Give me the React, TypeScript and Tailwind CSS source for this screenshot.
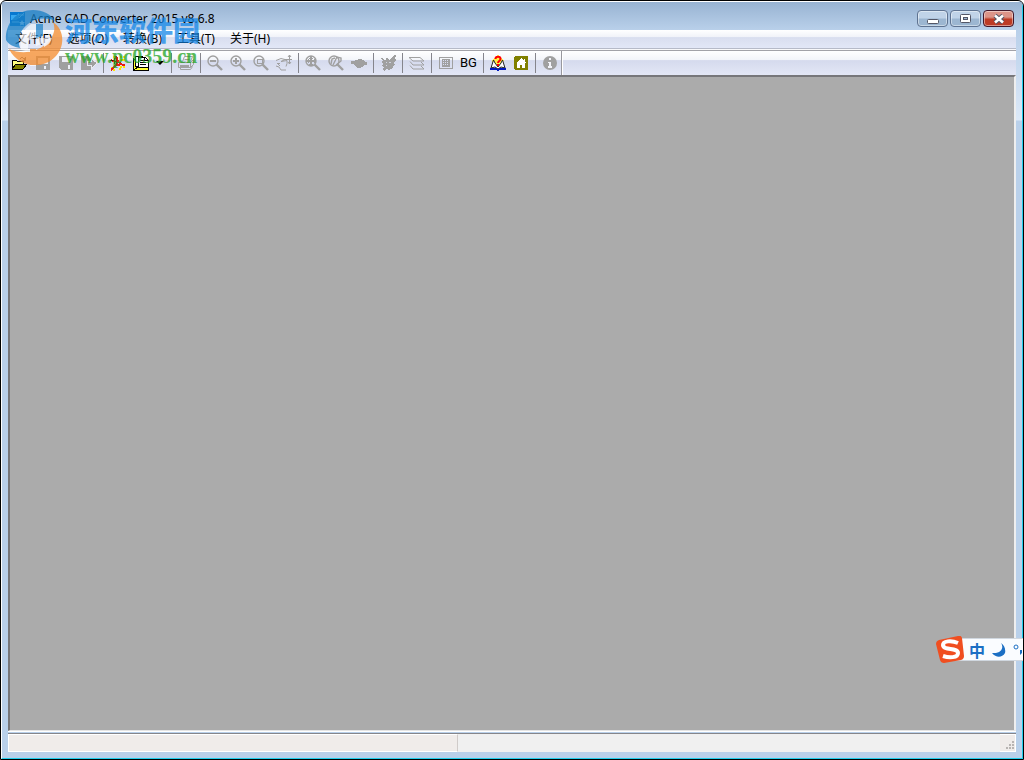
import type { ReactNode } from "react";

const menus = ["文件(F)", "选项(O)", "转换(B)", "工具(T)", "关于(H)"];

function Icon({ children }: { children: ReactNode }) {
  return (
    <svg
      className="h-4 w-4 shrink-0"
      viewBox="0 0 16 16"
      fill="none"
      stroke="#a0a0a0"
      shapeRendering="crispEdges"
      aria-hidden="true"
    >
      {children}
    </svg>
  );
}

function Magnifier({ children }: { children?: ReactNode }) {
  return (
    <Icon>
      <circle cx="6" cy="6" r="5" strokeWidth="1.4" shapeRendering="auto" />
      <path d="M9.5 9.5L15 15" strokeWidth="2.4" shapeRendering="auto" />
      {children}
    </Icon>
  );
}

function Tool({
  label,
  disabled = false,
  children,
}: {
  label: string;
  disabled?: boolean;
  children: ReactNode;
}) {
  return (
    <button
      type="button"
      aria-label={label}
      title={label}
      disabled={disabled}
      className="flex h-5 w-[23px] shrink-0 items-center justify-center"
    >
      {children}
    </button>
  );
}

function Separator() {
  return (
    <span className="flex h-5 w-1.5 shrink-0 justify-center">
      <span className="w-px bg-[#85858c]" />
    </span>
  );
}

function AppIcon() {
  return (
    <svg className="h-4 w-4 shrink-0" viewBox="0 0 16 16" aria-hidden="true">
      <path d="M0 1h15v14H0z" fill="#0878d0" />
      <path d="M1 4h6l2-2v5l-3 2H1z" fill="#38a8f0" />
      <path d="M9 7l5-5M8 4h6M2 11h7" stroke="#8fdcff" fill="none" />
      <path d="M12 9l1 2h2l-1.5 1.5.5 2-2-1-2 1 .5-2L9 11h2z" fill="#d8f2ff" />
    </svg>
  );
}

function TitleBar() {
  const button =
    "flex h-[17px] w-[31px] items-center justify-center rounded-sm border shadow-[inset_0_0_0_1px_rgba(255,255,255,0.45)]";

  return (
    <header className="flex h-7 items-start justify-between bg-linear-to-b from-[#98b3d2] to-[#b9d0ea] px-2">
      <div className="flex items-center gap-1 pt-[7px]">
        <AppIcon />
        <h1 className="whitespace-nowrap text-[12px] leading-5 text-black">
          Acme CAD Converter 2015 v8.6.8
        </h1>
      </div>
      <div className="flex gap-0.5 pt-2">
        <button
          type="button"
          aria-label="最小化"
          className={`${button} border-[#5f7391] bg-linear-to-b from-[#c0d3e8] from-45% to-[#9cb6d1] to-55%`}
        >
          <svg className="h-3 w-3" viewBox="0 0 12 12" aria-hidden="true">
            <rect x="0.5" y="6.5" width="11" height="4" rx="1" fill="#fff" stroke="#535666" />
          </svg>
        </button>
        <button
          type="button"
          aria-label="最大化"
          className={`${button} border-[#5f7391] bg-linear-to-b from-[#c0d3e8] from-45% to-[#9cb6d1] to-55%`}
        >
          <svg className="h-3 w-3" viewBox="0 0 12 12" aria-hidden="true">
            <rect x="0.5" y="1.5" width="10" height="8" rx="1" fill="#fff" stroke="#535666" />
            <rect x="3.5" y="4.5" width="4" height="2" fill="#9cb6d1" stroke="#535666" />
          </svg>
        </button>
        <button
          type="button"
          aria-label="关闭"
          className={`${button} border-[#42182a] bg-linear-to-b from-[#dc9488] from-40% to-[#bd3b25] to-55%`}
        >
          <svg className="h-3 w-3" viewBox="0 0 12 12" aria-hidden="true">
            <path d="M2 2.5l8 7M10 2.5l-8 7" stroke="#535666" strokeWidth="4.5" />
            <path d="M2 2.5l8 7M10 2.5l-8 7" stroke="#fff" strokeWidth="2.6" />
          </svg>
        </button>
      </div>
    </header>
  );
}

function MenuBar() {
  return (
    <nav className="flex h-[19px] items-center gap-px border-b border-[#b6bac8] bg-[linear-gradient(to_bottom,#ffffff,#f1f3f9_38%,#d9deef_42%,#e2e7f7)]">
      {menus.map((menu) => (
        <button
          key={menu}
          type="button"
          className="whitespace-nowrap px-[7px] text-[12px] leading-[18px] text-black"
        >
          {menu}
        </button>
      ))}
    </nav>
  );
}

function ToolBar() {
  return (
    <div
      role="toolbar"
      aria-label="工具栏"
      className="flex h-[25px] items-center border-t border-[#a2a2a8] bg-[linear-gradient(to_bottom,#ffffff,#f3f5fa_36%,#d5daed_40%,#e3e7f6)]"
    >
      <Tool label="打开">
        <Icon>
          <path d="M0 14V5h4l1 1h6v3" fill="#ffff80" stroke="#000" />
          <path d="M0 14l4-5h11l-4 5z" fill="#808000" stroke="#000" />
          <path d="M8 3.5q3-2 5 1M13.5 2v3H10" stroke="#777" />
        </Icon>
      </Tool>
      <Tool label="保存" disabled>
        <Icon>
          <path d="M1 1h14v14H1z" fill="#a0a0a0" stroke="none" />
          <path d="M3 3h10v6H3zM9 11h2v3H9z" fill="#edeff7" stroke="none" />
        </Icon>
      </Tool>
      <Tool label="另存为" disabled>
        <Icon>
          <path d="M1 1h14v14H3l-2-2z" fill="#a0a0a0" stroke="none" />
          <path d="M4 2h8v5H4zM10 10h2v4h-2z" fill="#edeff7" stroke="none" />
        </Icon>
      </Tool>
      <Tool label="导出" disabled>
        <Icon>
          <path d="M0 1h8l2 3v11H0z" fill="#a0a0a0" stroke="none" />
          <path d="M6 6h4V3l6 5-6 6v-4H6z" fill="#a0a0a0" stroke="#e8eaf2" />
        </Icon>
      </Tool>
      <Separator />
      <Tool label="导出 PDF">
        <Icon>
          <path
            d="M3 2h2M10 2h2M13 2h2M11 5h4M10 12h2M13 12h2M1 13h2M3 15h2M9 14h2"
            stroke="#ffe500"
            strokeWidth="2"
          />
          <path
            d="M6 1c0 5 4 9 9 9M6 1c3 4 2 9-5 14M4 11c4-2 7-2 11-1M1 5l4 2"
            stroke="#ec1b12"
            strokeWidth="2"
          />
          <path d="M0 5h4l3 3M4 3l1 6" stroke="#600000" />
        </Icon>
      </Tool>
      <Tool label="批量转换">
        <Icon>
          <path d="M0 3v12h15v-4l-4 1H7L4 7z" fill="#ffff30" stroke="#000" />
          <path d="M2 1h7v10H2z" fill="#fff" stroke="#000" />
          <path d="M5 2h7l3 3v7H5z" fill="#fff" stroke="#000" />
          <path d="M7 5h4M7 7h6M7 9h6M11 2v3h4" stroke="#000" />
          <path d="M1 15l4-3h10" stroke="#000" />
        </Icon>
      </Tool>
      <button
        type="button"
        aria-label="转换选项"
        className="flex h-5 w-4 shrink-0 items-center justify-center"
      >
        <svg className="h-1 w-2" viewBox="0 0 8 4" aria-hidden="true">
          <path d="M0 0h8L4 4z" />
        </svg>
      </button>
      <Separator />
      <Tool label="打印" disabled>
        <Icon>
          <path
            d="M4.5 6.5l2-5h8l-2 5M.5 7.5h12v5H.5zM12.5 7.5l3-3v5l-3 3M2.5 12.5v2h10l2-3M6.5 4.5h5"
            shapeRendering="auto"
          />
          <path d="M2 10h9v2H2z" fill="#a0a0a0" stroke="none" />
        </Icon>
      </Tool>
      <Separator />
      <Tool label="缩小" disabled>
        <Magnifier>
          <path d="M3 6h6" strokeWidth="2" />
        </Magnifier>
      </Tool>
      <Tool label="放大" disabled>
        <Magnifier>
          <path d="M3 6h6M6 3v6" strokeWidth="2" />
        </Magnifier>
      </Tool>
      <Tool label="窗口缩放" disabled>
        <Magnifier>
          <path d="M4 4h5v4H4z" />
        </Magnifier>
      </Tool>
      <Tool label="平移" disabled>
        <Icon>
          <path
            d="M0 5.5l5-2 4 1-4 2 6-1v3l-1 3M1 8.5h3M0 11l3 1 2 3h5M2 9l2 2M13.5 0v9M9 4.5h7M12 2l1.5-2L15 2M12 7l1.5 2L15 7"
            shapeRendering="auto"
          />
        </Icon>
      </Tool>
      <Separator />
      <Tool label="全部显示" disabled>
        <Magnifier>
          <path d="M1 6h10M6 1v10" strokeWidth="2" />
          <path d="M4 3h4M4 9h4M3 4v4M9 4v4" />
        </Magnifier>
      </Tool>
      <Tool label="上一视图" disabled>
        <Magnifier>
          <path d="M3 9l1-5 3-1M5 10l4-8 4 1v3l-5 4" strokeWidth="1.4" shapeRendering="auto" />
        </Magnifier>
      </Tool>
      <Tool label="三维视图" disabled>
        <Icon>
          <path
            d="M0 6l3 1 2-2h2V4h3v1h2l2 2h2v2h-2l-2 2-2 1H6l-3-3-3-1z"
            fill="#a0a0a0"
          />
        </Icon>
      </Tool>
      <Separator />
      <Tool label="重新生成" disabled>
        <Icon>
          <path
            d="M1 3h2l1 2h2V3h2l1 2 2-1 3-4h2l-1 4 1 1-2 2 1 3-2 1v2l-3 1-1 2-2-2-3 2-1-1 1-3-3-1 2-2-2-2 2-1z"
            fill="#a0a0a0"
            stroke="none"
          />
          <path d="M6 7h1M9 7h2M6 10h1" stroke="#cfd3df" />
        </Icon>
      </Tool>
      <Separator />
      <Tool label="图层" disabled>
        <Icon>
          <path
            d="M0 2.5h11l4 3.500H4zM1 6.500l3 3.500h11l-3-3M1 10.500l3 3.500h11l-3-3"
            shapeRendering="auto"
          />
        </Icon>
      </Tool>
      <Separator />
      <Tool label="视图" disabled>
        <Icon>
          <path d="M1.5 2.5h13v11h-13z" />
          <path d="M4.5 4.5h7v7h-7zM4 6.5h8M4 8.5h8M4 10.5h8M6.500 4v8M8.500 4v8M10.500 4v8" />
        </Icon>
      </Tool>
      <button
        type="button"
        aria-label="背景 BG"
        className="flex h-5 w-[23px] shrink-0 items-center justify-center font-['Roboto',sans-serif] text-[13px] text-black"
      >
        BG
      </button>
      <Separator />
      <Tool label="帮助">
        <Icon>
          <path d="M8 0l6 5-2 6H4L2 5z" fill="#fff04a" stroke="none" />
          <path
            d="M3.5 5L1 13l4-1 3 2 3-2 4 1-2.500-8L11 8l-3 4-3-4z"
            fill="#fff"
            stroke="#222"
            shapeRendering="auto"
          />
          <path d="M0 14h6l2 1 2-1h6" stroke="#0018c0" strokeWidth="2" />
          <path
            d="M5.500 4c0-3 5-3 5 0 0 2-2.500 2-2.500 4M8 9v2"
            stroke="#f00"
            strokeWidth="2"
            shapeRendering="auto"
          />
        </Icon>
      </Tool>
      <Tool label="主页">
        <Icon>
          <path d="M2 1h12l1 1v12l-1 1H2l-1-1V2z" fill="#808000" stroke="none" />
          <path
            d="M8 3l5 5h-1v5H9v-3H7v3H4V8H3zM11 4h1v3h-1z"
            fill="#fff"
            stroke="none"
          />
        </Icon>
      </Tool>
      <Separator />
      <Tool label="信息" disabled>
        <Icon>
          <circle cx="8" cy="8" r="7" fill="#a0a0a0" stroke="none" shapeRendering="auto" />
          <path d="M7 3h2v2H7zM6 7h3v4h1v2H6v-2h1V8H6z" fill="#f3f4fa" stroke="none" />
        </Icon>
      </Tool>
      <span className="h-full w-px bg-[#98989e]" />
      <span className="h-full w-px bg-white" />
    </div>
  );
}

function StatusBar() {
  return (
    <footer className="mt-px flex h-[19px] border-t border-[#85858a] bg-[#f0f0f0]">
      <div className="w-[450px] border-y border-l border-r border-y-white border-l-white border-r-[#d0cbc9] bg-[#f0ecea]" />
      <div className="flex-1" />
      <div className="flex w-4 items-end justify-end border-y border-r border-white bg-[#f0ecea]">
        <svg className="h-3 w-3" viewBox="0 0 12 12" fill="#b8b4b2" aria-hidden="true">
          <path d="M9 2h2v2H9zM6 5h2v2H6zM9 5h2v2H9zM3 8h2v2H3zM6 8h2v2H6zM9 8h2v2H9z" />
        </svg>
      </div>
    </footer>
  );
}

function Watermark() {
  return (
    <div className="pointer-events-none absolute left-1 top-1.5 flex gap-0.5 opacity-75">
      <svg className="h-[60px] w-[58px]" viewBox="0 0 58 60" aria-hidden="true">
        <path
          d="M1 33C0 16 12 3 28 3c10 0 18 4 22 11-9-4-20-3-27 3-8 6-11 15-8 24C9 40 4 38 1 33z"
          fill="#197fc6"
        />
        <path
          d="M4 42c13 6 28 3 37-5 8-7 10-15 7-22 12 8 12 25 2 35-11 12-36 12-46-8z"
          fill="#f58b2b"
        />
        <path
          d="M26 17h12v12l-7 2h16c-1 4-4 7-8 9v-4l-8 3v-9l-8 4v8h8v17h-6V45l-9-2c-2-11 1-20 10-26z"
          fill="#fff"
          opacity=".85"
        />
        <path d="M31 17h7v12l-7 2z" fill="#2487cb" />
        <path d="M25 42h6v16h-6z" fill="#f58b2b" />
      </svg>
      <div className="flex flex-col pt-2">
        <span className="whitespace-nowrap font-['Noto_Sans_CJK_SC',sans-serif] text-[27px] font-black leading-[29px] text-[#1688e8]">
          河东软件园
        </span>
        <span className="font-['Liberation_Serif',serif] text-[20px] font-bold leading-6 text-[#22a522]">
          www.pc0359.cn
        </span>
      </div>
    </div>
  );
}

function InputMethodBar() {
  return (
    <div className="absolute bottom-24 right-0 flex h-[27px] w-[87px] items-center">
      <div className="absolute inset-y-[2px] left-3 right-0 border-y border-[#d0d7df] bg-[#fafcff]" />
      <svg className="relative h-[27px] w-[28px]" viewBox="0 0 28 27" aria-hidden="true">
        <path d="M3 4L22 0q3-1 4 2l2 18q0 3-3 4L8 27q-3 0-4-3L0 8q0-3 3-4z" fill="#f04e20" />
        <path
          d="M22 7C15 4 7 5 7 9c0 6 15 2 15 8 0 5-9 5-15 3"
          fill="none"
          stroke="#fff"
          strokeWidth="4"
        />
      </svg>
      <span className="relative ml-1 w-[18px] text-center font-['Noto_Sans_CJK_SC',sans-serif] text-[16px] font-bold leading-5 text-[#1c6fc4]">
        中
      </span>
      <svg className="relative h-[27px] w-[37px]" viewBox="0 0 37 27" aria-hidden="true">
        <path
          d="M15 7c3 4 1 11-9 10 4 5 10 5 13 0 1-4-1-8-4-10zM34 14h2v3l-2 2z"
          fill="#1c6fc4"
        />
        <circle cx="30" cy="11" r="2" fill="none" stroke="#1c6fc4" />
      </svg>
    </div>
  );
}

export default function App() {
  return (
    <div className="relative flex min-h-screen flex-col overflow-hidden rounded-t-md border border-black bg-[#b9d0ea] font-['Noto_Sans','Noto_Sans_CJK_SC',sans-serif]">
      <div className="flex flex-1 flex-col rounded-t-md border border-b-[#20cdec] border-l-white border-r-[#20cdec] border-t-white">
        <TitleBar />
        <div className="flex flex-1 bg-[linear-gradient(to_bottom,#b9d0ea,#dce9f8_90px,#b9d0ea_91px)] px-1.5 pb-1.5">
          <div className="flex min-w-0 flex-1 flex-col">
            <MenuBar />
            <div className="h-px bg-[#f8f8fa]" />
            <ToolBar />
            <main className="flex-1 border-b border-l-2 border-r-2 border-t-2 border-b-[#e4e4e4] border-l-[#77777a] border-r-[#eeeeee] border-t-[#77777a] bg-[#ababab]" />
            <div className="h-px bg-white" />
            <StatusBar />
          </div>
        </div>
      </div>
      <Watermark />
      <InputMethodBar />
    </div>
  );
}
